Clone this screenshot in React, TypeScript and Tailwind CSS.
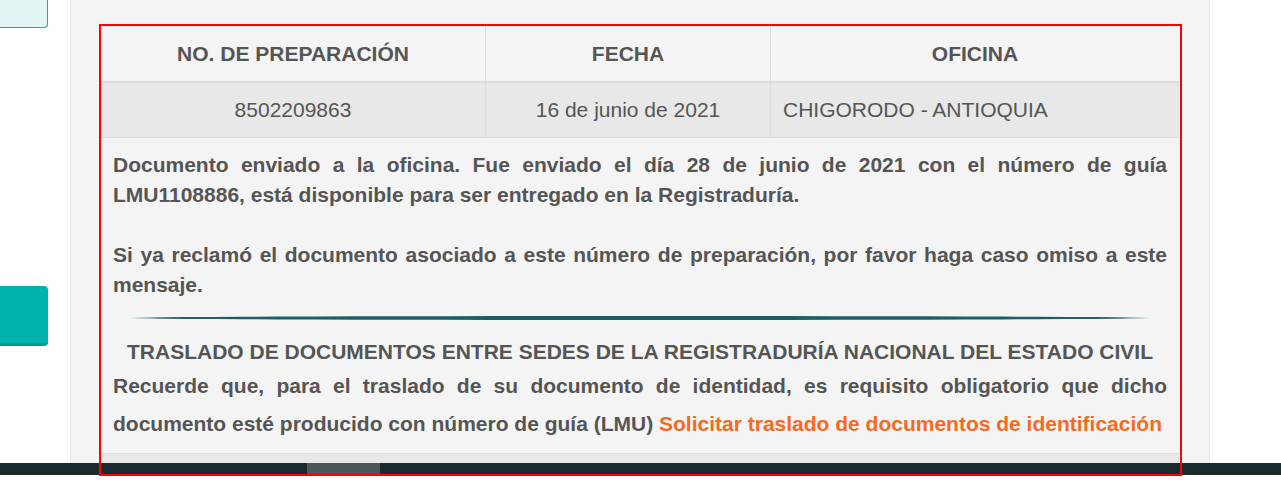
import React from 'react';

const columns = [
  { title: 'NO. DE PREPARACIÓN', value: '8502209863', align: 'text-center' },
  { title: 'FECHA', value: '16 de junio de 2021', align: 'text-center' },
  { title: 'OFICINA', value: 'CHIGORODO - ANTIOQUIA', align: 'text-left' },
];

export default function App() {
  return (
    <div className="relative h-[501px] w-full overflow-hidden bg-white font-['Liberation_Sans',Arial,sans-serif] text-[#555555]">
      <div className="flex h-[463px]">
        {/* Left sidebar */}
        <div className="flex w-[70px] shrink-0 flex-col">
          <div className="h-[28px] w-[48px] rounded-br-[4px] border-r border-b border-[#22aaa5] bg-[#e2f5f4]" />
          <div className="mt-[258px] h-[60px] w-[48px] rounded-r-[4px] border-b-[3px] border-[#009893] bg-[#00b2ad]" />
        </div>

        {/* Main panel */}
        <div className="w-[1140px] shrink-0 border-x border-[#e6e6e6] bg-[#f4f4f4] px-[30px] pt-[26px]">
          {/* Table header */}
          <div className="grid grid-cols-[384px_285px_1fr] border-b-2 border-[#dddddd]">
            {columns.map((c, i) => (
              <div
                key={c.title}
                className={`flex h-[55px] items-center justify-center text-[21px] font-bold ${i > 0 ? 'border-l border-[#dddddd]' : ''}`}
              >
                {c.title}
              </div>
            ))}
          </div>

          {/* Data row */}
          <div className="grid grid-cols-[384px_285px_1fr] border-b border-[#dddddd] bg-[#e8e8e8]">
            {columns.map((c, i) => (
              <div
                key={c.value}
                className={`flex h-[54px] items-center px-3 text-[21px] ${c.align === 'text-center' ? 'justify-center' : 'justify-start'} ${i > 0 ? 'border-l border-[#dddddd]' : ''}`}
              >
                {c.value}
              </div>
            ))}
          </div>

          {/* Message */}
          <div className="border-b border-[#dddddd] px-3 pt-3 pb-[10px] text-[21px] font-bold">
            <p className="text-justify leading-[30px]">
              Documento enviado a la oficina. Fue enviado el día 28 de junio de 2021 con el número de guía LMU1108886, está disponible para ser entregado en la Registraduría.
            </p>
            <p className="mt-[30px] text-justify leading-[30px]">
              Si ya reclamó el documento asociado a este número de preparación, por favor haga caso omiso a este mensaje.
            </p>

            <div className="mx-[14px] mt-[16px] h-[4px] rounded-[50%] bg-[linear-gradient(to_right,#f4f4f4,#1d5f69_3%,#1d5f69_97%,#f4f4f4)]" />

            <h3 className="mt-[17px] text-center leading-[30px]">
              TRASLADO DE DOCUMENTOS ENTRE SEDES DE LA REGISTRADURÍA NACIONAL DEL ESTADO CIVIL
            </h3>
            <p className="text-justify leading-[38px]">
              Recuerde que, para el traslado de su documento de identidad, es requisito obligatorio que dicho documento esté producido con número de guía (LMU){' '}
              <a href="#" className="text-[#f46a1f]">
                Solicitar traslado de documentos de identificación
              </a>
            </p>
          </div>
          <div className="h-[20px] bg-[#e8e8e8]" />
        </div>
      </div>

      {/* Bottom scrollbar */}
      <div className="relative h-[12px] w-full bg-[#1b2a2d]">
        <div className="absolute top-0 left-[307px] h-[12px] w-[73px] bg-[#4a5858]" />
      </div>

      {/* Highlight frame */}
      <div className="pointer-events-none absolute top-[24px] left-[99px] h-[452px] w-[1083px] border-2 border-[#ff0000]" />
    </div>
  );
}
